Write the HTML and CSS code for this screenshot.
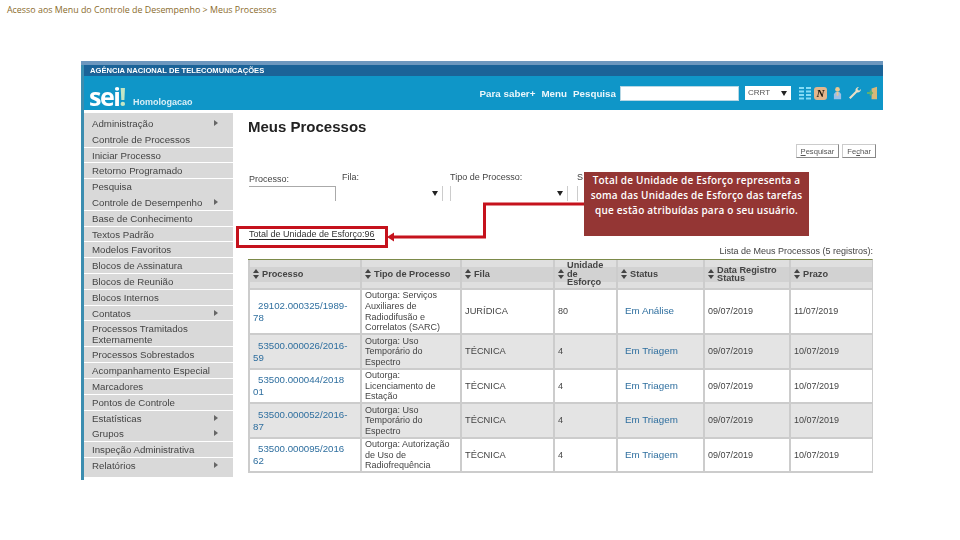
FILE: index.html
```html
<!DOCTYPE html>
<html lang="pt-BR">
<head>
<meta charset="utf-8">
<title>Meus Processos</title>
<link rel="stylesheet" href="styles.css">
</head>
<body>
<div class="slide">
  <p class="caption">Acesso aos Menu do Controle de Desempenho &gt; Meus Processos</p>
  <div class="window">
    <div class="strip"></div>
    <div class="agency">AGÊNCIA NACIONAL DE TELECOMUNICAÇÕES</div>
    <header class="topbar">
      <div class="brand"><span class="logo">sei<span class="bang">!</span></span><span class="env">Homologacao</span></div>
      <nav class="tools">
        <a>Para saber+</a><a>Menu</a><a>Pesquisa</a>
        <span class="search"></span>
        <span class="unit">CRRT<i class="tri"></i></span>
        <svg class="ico" viewBox="0 0 14 14"><path fill="#86dcf6" d="M1 1h5v2H1zM8 1h5v2H8zM1 4.500h5v2H1zM8 4.500h5v2H8zM1 8h5v2H1zM8 8h5v2H8zM1 11.500h5v2H1zM8 11.500h5v2H8z"/></svg>
        <span class="badge">N</span>
        <svg class="ico person" viewBox="0 0 10 14"><circle cx="5" cy="3" r="2.600" fill="#ecc890"/><path fill="#9cc0e6" d="M1 14V8l2-2h4l2 2v6z"/><path fill="#ecc890" d="M4 6h2v4H4z"/></svg>
        <svg class="ico" viewBox="0 0 14 14"><path fill="#eadfc6" d="M1 11.500 7.500 5c-.5-2 1-4 3.500-4L9.200 3l1.800 1.800L13 3c0 2.500-2 4-4 3.500L2.500 13z"/></svg>
        <svg class="ico exit" viewBox="0 0 11 14"><path fill="#d8b878" d="M5 2l6-2v14H5z"/><path fill="#5fb070" d="M0 6h3V3.500L7 7l-4 3.500V8H0z"/></svg>
      </nav>
    </header>
    <div class="content">
      <ul class="menu">
        <li class="arrow flush">Administração</li>
        <li>Controle de Processos</li>
        <li>Iniciar Processo</li>
        <li>Retorno Programado</li>
        <li class="flush">Pesquisa</li>
        <li class="arrow">Controle de Desempenho</li>
        <li>Base de Conhecimento</li>
        <li>Textos Padrão</li>
        <li>Modelos Favoritos</li>
        <li>Blocos de Assinatura</li>
        <li>Blocos de Reunião</li>
        <li>Blocos Internos</li>
        <li class="arrow">Contatos</li>
        <li class="double">Processos Tramitados Externamente</li>
        <li>Processos Sobrestados</li>
        <li>Acompanhamento Especial</li>
        <li>Marcadores</li>
        <li>Pontos de Controle</li>
        <li class="arrow flush">Estatísticas</li>
        <li class="arrow">Grupos</li>
        <li>Inspeção Administrativa</li>
        <li class="arrow">Relatórios</li>
      </ul>
      <main class="main">
        <h1 class="title">Meus Processos</h1>
        <div class="actions"><button class="btn"><u>P</u>esquisar</button><button class="btn">Fe<u>c</u>har</button></div>
        <div class="filters">
          <div class="field f1"><label>Processo:</label><span class="box"></span></div>
          <div class="field f2"><label>Fila:</label><span class="sel"><i class="tri"></i></span></div>
          <div class="field f3"><label>Tipo de Processo:</label><span class="sel"><i class="tri"></i></span></div>
          <div class="field f4"><label>S</label><span class="sel"></span></div>
        </div>
        <p class="total">Total de Unidade de Esforço:96</p>
        <p class="count">Lista de Meus Processos (5 registros):</p>
        <table class="grid">
          <colgroup><col class="c1"><col class="c2"><col class="c3"><col class="c4"><col class="c5"><col class="c6"><col class="c7"></colgroup>
          <thead>
            <tr>
              <th><span class="sort"></span>Processo</th>
              <th><span class="sort"></span>Tipo de Processo</th>
              <th><span class="sort"></span>Fila</th>
              <th><span class="sort"></span>Unidade de Esforço</th>
              <th><span class="sort"></span>Status</th>
              <th><span class="sort"></span>Data Registro Status</th>
              <th><span class="sort"></span>Prazo</th>
            </tr>
          </thead>
          <tbody>
            <tr class="r1"><td class="num"><a>29102.000325/1989-78</a></td><td>Outorga: Serviços Auxiliares de Radiodifusão e Correlatos (SARC)</td><td class="fila">JURÍDICA</td><td class="qty">80</td><td class="st"><a>Em Análise</a></td><td>09/07/2019</td><td>11/07/2019</td></tr>
            <tr class="r2 alt"><td class="num"><a>53500.000026/2016-59</a></td><td>Outorga: Uso Temporário do Espectro</td><td class="fila">TÉCNICA</td><td class="qty">4</td><td class="st"><a>Em Triagem</a></td><td>09/07/2019</td><td>10/07/2019</td></tr>
            <tr class="r3"><td class="num"><a>53500.000044/2018 01</a></td><td>Outorga: Licenciamento de Estação</td><td class="fila">TÉCNICA</td><td class="qty">4</td><td class="st"><a>Em Triagem</a></td><td>09/07/2019</td><td>10/07/2019</td></tr>
            <tr class="r2 alt"><td class="num"><a>53500.000052/2016-87</a></td><td>Outorga: Uso Temporário do Espectro</td><td class="fila">TÉCNICA</td><td class="qty">4</td><td class="st"><a>Em Triagem</a></td><td>09/07/2019</td><td>10/07/2019</td></tr>
            <tr class="r3"><td class="num"><a>53500.000095/2016 62</a></td><td>Outorga: Autorização de Uso de Radiofrequência</td><td class="fila">TÉCNICA</td><td class="qty">4</td><td class="st"><a>Em Triagem</a></td><td>09/07/2019</td><td>10/07/2019</td></tr>
          </tbody>
        </table>
      </main>
    </div>
  </div>
  <div class="note">Total de Unidade de Esforço representa a soma das Unidades de Esforço  das tarefas que estão atribuídas para o seu usuário.</div>
  <div class="mark"></div>
  <svg class="pointer" viewBox="0 0 960 540"><path d="M584 204H484.500V237H392" fill="none" stroke="#c5121c" stroke-width="3"/><path d="M387 237l7-4.500v9z" fill="#c5121c"/></svg>
</div>
</body>
</html>
```
FILE: styles.css
```css
* { box-sizing: border-box; }
html, body { margin: 0; padding: 0; background: #fff; }
.slide { position: relative; width: 960px; height: 540px; overflow: hidden; font-family: "Liberation Sans", Arial, sans-serif; }
.caption { margin: 0; padding: 4px 0 0 7px; height: 61px; font: 8.900px/11px "Open Sans", sans-serif; color: #8a6b2c; }
.window { width: 802px; margin-left: 81px; border-left: 3px solid #3b8db0; filter: blur(.35px); }
.strip { height: 4px; background: #6d97be; margin-left: -3px; }
.agency { height: 11px; background: #1b6398; color: #fff; font-size: 7.600px; font-weight: bold; line-height: 12px; padding-left: 6px; white-space: nowrap; }
.topbar { height: 34px; background: #0f96c8; display: flex; justify-content: space-between; align-items: center; }
.brand { display: flex; align-items: flex-end; padding-left: 5px; height: 100%; }
.logo { font: bold 25px/28px "Open Sans", sans-serif; color: #fff; letter-spacing: -1.500px; }
.bang { color: #c4e6c4; }
.env { color: #d8eef6; font-size: 9px; font-weight: bold; margin: 0 0 3px 8px; }
.tools { display: flex; align-items: center; height: 100%; padding-right: 6px; color: #fff; font-size: 9.800px; font-weight: bold; }
.tools a { margin-left: 6px; color: #eaf6fb; white-space: nowrap; }
.search { width: 119px; height: 15px; background: #fff; border: 1px solid #b7d7e4; margin-left: 4px; }
.unit { width: 46px; height: 14px; background: #fff; margin-left: 6px; margin-right: 7px; position: relative; font-size: 8px; font-weight: normal; color: #555; padding: 2px 0 0 3px; line-height: 10px; }
.unit .tri { position: absolute; right: 4px; top: 5px; }
.tri { display: block; width: 0; height: 0; border-left: 3px solid transparent; border-right: 3px solid transparent; border-top: 5px solid #222; }
.ico { width: 14px; height: 14px; flex: none; }
.badge { width: 13px; height: 13px; margin-left: 2px; border-radius: 3px; background: #e3b68c; color: #1a1208; font: italic bold 11px/13px "Liberation Serif", serif; text-align: center; flex: none; }
.person { width: 9px; margin-left: 6px; }
.ico:nth-of-type(3) { margin-left: 6px; }
.exit { width: 10px; margin-left: 5px; }
.content { display: flex; height: 370px; background: #fff; }
.menu { list-style: none; margin: 3px 0 0 0; padding: 3px 0 4px; width: 149px; height: 364px; background: #d9d9d9; font-size: 9.700px; color: #444; }
.menu li { height: 15.800px; line-height: 15px; padding-left: 8px; border-bottom: 1px solid #fff; position: relative; white-space: nowrap; }
.menu li.flush { border-bottom: 0; }
.menu li.double { height: 26px; line-height: 11px; padding-top: 2px; white-space: normal; padding-right: 20px; }
.menu li:last-child { border-bottom: 0; }
.menu .arrow::after { content: ""; position: absolute; left: 130px; top: 4px; border-left: 4px solid #666; border-top: 3.500px solid transparent; border-bottom: 3.500px solid transparent; }
.main { position: relative; flex: 1; padding: 8px 10px 0 15px; color: #444; font-size: 9px; }
.title { margin: 0; font-size: 15px; line-height: 17px; font-weight: bold; color: #222; }
.actions { display: flex; justify-content: flex-end; gap: 3px; margin: 9px -3px 0 0; height: 14px; }
.btn { height: 14px; padding: 0 4px; background: #fff; border: 1px solid #888; border-left-color: #ccc; border-top-color: #ccc; font: 7.600px "Liberation Sans", sans-serif; color: #555; }
.filters { display: flex; height: 37px; margin-top: 14px; padding-left: 1px; }
.field label { display: block; line-height: 11px; }
.f1 { width: 93px; padding-top: 2px; }
.f1 .box { display: block; width: 87px; height: 15px; border: 1px solid #aaa; border-bottom: 0; border-left: 0; margin-top: 1px; }
.f2 { width: 108px; }
.f3 { width: 127px; }
.sel { display: block; height: 15px; margin-top: 3px; border-right: 1px solid #ccc; position: relative; width: 101px; }
.sel .tri { position: absolute; right: 4px; top: 5px; }
.f3 .sel { border-left: 1px solid #ccc; width: 118px; }
.f4 .sel { border: 0; border-left: 1px solid #ccc; width: 4px; }
.total { position: absolute; left: 16px; top: 119px; margin: 0; line-height: 10px; border-bottom: 1px solid #222; white-space: nowrap; color: #333; }
.count { margin: 37px 0 0 0; text-align: right; line-height: 11px; font-size: 9px; color: #444; }
.grid { width: 624px; table-layout: fixed; border-collapse: separate; border-spacing: 0; margin-top: 2px; background: #ccc; border-top: 1px solid #7c8a4a; border-right: 1px solid #ccc; font-size: 9px; }
.c1 { width: 112px; } .c2 { width: 100px; } .c3 { width: 93px; } .c4 { width: 63px; } .c5 { width: 87px; } .c6 { width: 86px; } .c7 { width: 83px; }
.grid th { height: 30px; padding: 0 2px 0 12px; background: linear-gradient(#dfdfdf 0 7px, #d2d2d2 7px 22px, #dfdfdf 22px); border-left: 2px solid #ccc; border-bottom: 2px solid #ccc; font-size: 9.200px; font-weight: bold; text-align: left; color: #444; position: relative; line-height: 8.500px; }
.grid td { padding: 0 2px 0 3px; background: #fff; border-left: 2px solid #ccc; border-bottom: 2px solid #ccc; line-height: 10.600px; color: #444; }
.grid .alt td { background: #e4e4e4; }
.grid a { color: #2f6f9f; }
.grid .num { padding-right: 13px; font-size: 9.700px; line-height: 12px; text-indent: 5px; }
.grid .fila { font-size: 9.300px; }
.grid .st { padding-left: 7px; font-size: 9.800px; }
.r1 td { height: 45px; } .r2 td { height: 35px; } .r3 td { height: 34px; }
.sort { position: absolute; left: 3px; top: 50%; width: 6px; height: 10px; margin-top: -5px; }
.sort::before, .sort::after { content: ""; position: absolute; left: 0; border-left: 3px solid transparent; border-right: 3px solid transparent; }
.sort::before { top: 0; border-bottom: 4px solid #444; }
.sort::after { bottom: 0; border-top: 4px solid #444; }
.note { position: absolute; left: 584px; top: 172px; width: 225px; height: 64px; padding: 1px 4px 0; background: #943634; color: #fff; font: 600 10px/14.800px "Open Sans", sans-serif; text-align: center; letter-spacing: .22px; }
.mark { position: absolute; left: 236px; top: 226px; width: 152px; height: 22px; border: 3px solid #c5121c; }
.pointer { position: absolute; left: 0; top: 0; width: 960px; height: 540px; }
```
